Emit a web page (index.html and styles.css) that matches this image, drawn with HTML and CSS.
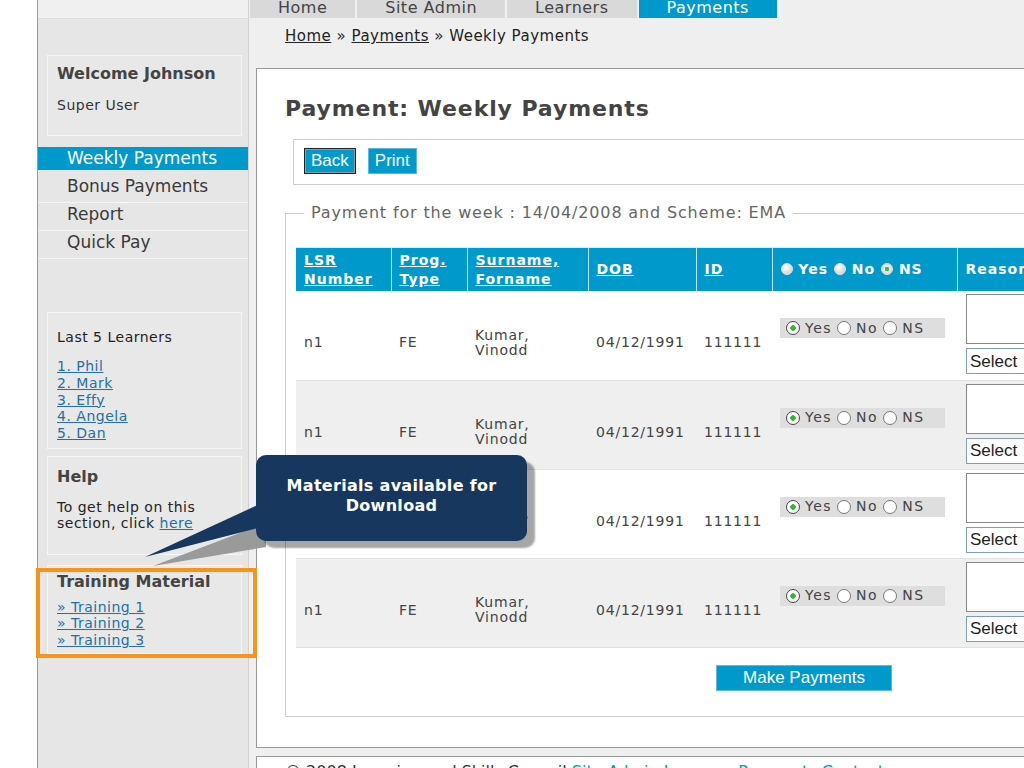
FILE: index.html
```html
<!DOCTYPE html>
<html lang="en">
<head>
    <meta charset="UTF-8">
    <meta name="viewport" content="width=device-width, initial-scale=1.0">
    <link rel="stylesheet" href="styles.css">
    <title>Payment: Weekly Payments</title>
</head>
<body>
    <div class="page">
        <aside class="sidebar">
            <div class="side-top"></div>
            <div class="box welcome">
                <h2>Welcome Johnson</h2>
                <p>Super User</p>
            </div>
            <ul class="side-menu">
                <li class="active"><a href="#">Weekly Payments</a></li>
                <li><a href="#">Bonus Payments</a></li>
                <li><a href="#">Report</a></li>
                <li><a href="#">Quick Pay</a></li>
            </ul>
            <div class="box learners">
                <p>Last 5 Learners</p>
                <ul class="links">
                    <li><a href="#">1. Phil</a></li>
                    <li><a href="#">2. Mark</a></li>
                    <li><a href="#">3. Effy</a></li>
                    <li><a href="#">4. Angela</a></li>
                    <li><a href="#">5. Dan</a></li>
                </ul>
            </div>
            <div class="box help">
                <h2>Help</h2>
                <p>To get help on this section, click <a href="#">here</a></p>
            </div>
            <div class="box training">
                <h2>Training Material</h2>
                <ul class="links">
                    <li><a href="#">&raquo; Training 1</a></li>
                    <li><a href="#">&raquo; Training 2</a></li>
                    <li><a href="#">&raquo; Training 3</a></li>
                </ul>
            </div>
        </aside>

        <div class="main">
            <ul class="tabs">
                <li><a href="#">Home</a></li>
                <li><a href="#">Site Admin</a></li>
                <li><a href="#">Learners</a></li>
                <li class="active"><a href="#">Payments</a></li>
            </ul>
            <div class="crumbs"><a href="#">Home</a> &raquo; <a href="#">Payments</a> &raquo; Weekly Payments</div>

            <div class="panel">
                <h1>Payment: Weekly Payments</h1>
                <div class="toolbar">
                    <button class="btn btn-focus">Back</button>
                    <button class="btn">Print</button>
                </div>

                <fieldset class="week">
                    <legend>Payment for the week : 14/04/2008 and Scheme: EMA</legend>
                    <table class="grid">
                        <colgroup>
                            <col style="width:95px">
                            <col style="width:76px">
                            <col style="width:121px">
                            <col style="width:108px">
                            <col style="width:76px">
                            <col style="width:185px">
                            <col>
                        </colgroup>
                        <thead>
                            <tr>
                                <th><a href="#">LSR<br>Number</a></th>
                                <th><a href="#">Prog.<br>Type</a></th>
                                <th><a href="#">Surname,<br>Forname</a></th>
                                <th><a href="#">DOB</a></th>
                                <th><a href="#">ID</a></th>
                                <th class="head-choice">
                                    <input type="radio" name="all"> Yes
                                    <input type="radio" name="all"> No
                                    <input type="radio" name="all" checked> NS
                                </th>
                                <th>Reason</th>
                            </tr>
                        </thead>
                        <tbody id="rows"></tbody>
                    </table>
                    <div class="actions">
                        <button class="btn btn-wide">Make Payments</button>
                    </div>
                </fieldset>
            </div>

            <div class="footer">
                &copy; 2008 Learning and Skills Council <a href="#">Site Admin</a> <a href="#">Learners</a> <a href="#">Payments</a> <a href="#">Contact</a>
            </div>
        </div>
    </div>

    <svg class="tail" width="130" height="80" viewBox="0 0 130 80">
        <polygon points="126,28 126,52 13,71" fill="#9a9a9a"/>
        <polygon points="122,8 122,32 5,62" fill="#17375e"/>
    </svg>
    <div class="callout">Materials available for<br>Download</div>
    <div class="highlight"></div>

    <script>
        let rows = document.getElementById('rows');
        for (let i = 0; i < 4; i++) {
            let tr = document.createElement('tr');
            tr.innerHTML =
                '<td>n1</td>' +
                '<td>FE</td>' +
                '<td>Kumar,<br>Vinodd</td>' +
                '<td>04/12/1991</td>' +
                '<td>111111</td>' +
                '<td class="pick"><span class="choice">' +
                    '<input type="radio" name="r' + i + '" checked> Yes ' +
                    '<input type="radio" name="r' + i + '"> No ' +
                    '<input type="radio" name="r' + i + '"> NS' +
                '</span></td>' +
                '<td class="reason"><textarea></textarea>' +
                    '<select><option>Select</option></select></td>';
            rows.appendChild(tr);
        }
    </script>
</body>
</html>
```

FILE: styles.css
```css
body {
    margin: 0;
    width: 1024px;
    height: 768px;
    overflow: hidden;
    position: relative;
    background-color: #fff;
    font-family: "DejaVu Sans", Verdana, sans-serif;
    color: #333;
}

ul {
    list-style: none;
    margin: 0;
    padding: 0;
}

a {
    color: #1f6fa8;
}

.page {
    display: flex;
    margin-left: 37px;
    border-left: 1px solid #999;
    height: 768px;
}

/* left column */
.sidebar {
    width: 210px;
    flex: none;
    background-color: #e6e6e6;
    border-right: 1px solid #d2d2d2;
}

.side-top {
    height: 18px;
    background-color: #f0f0f0;
    border-bottom: 1px solid #dcdcdc;
}

.box {
    margin: 0 6px 0 9px;
    background-color: #e8e8e8;
    border: 1px solid #f6f6f6;
    padding: 0 9px;
}

.box h2 {
    margin: 0;
    font-size: 16px;
    line-height: 20px;
    color: #444;
}

.box p {
    margin: 0;
    font-size: 14px;
    letter-spacing: 0.5px;
}

.links {
    font-size: 14px;
    line-height: 16.8px;
    letter-spacing: 0.5px;
}

.welcome {
    margin-top: 36px;
    padding-top: 8px;
    padding-bottom: 21px;
}

.welcome p {
    margin-top: 12px;
    line-height: 18px;
}

.side-menu {
    margin-top: 11px;
    font-size: 17px;
}

.side-menu li {
    padding-bottom: 4px;
    border-bottom: 1px solid #f5f5f5;
}

.side-menu li:first-child {
    border-bottom: 0;
    padding-bottom: 5px;
}

.side-menu a {
    display: block;
    padding-left: 29px;
    line-height: 23px;
    color: #3a3a3a;
    text-decoration: none;
}

.side-menu .active a {
    background-color: #0099cc;
    color: #fff;
}

.learners {
    margin-top: 53px;
    padding-top: 15px;
    padding-bottom: 6px;
}

.learners p {
    line-height: 18px;
    color: #222;
}

.learners .links {
    margin-top: 12px;
}

.help {
    margin-top: 7px;
    padding-top: 10px;
    padding-bottom: 23px;
}

.help p {
    margin-top: 12px;
    line-height: 16px;
    color: #222;
}

.training {
    margin-top: 10px;
    padding-top: 6px;
    padding-bottom: 5px;
}

.training .links {
    margin-top: 7px;
    line-height: 16.5px;
}

/* main column */
.main {
    flex: none;
    width: 1100px;
    background-color: #efefef;
}

.tabs {
    display: flex;
    height: 18px;
    padding-left: 1px;
}

.tabs li {
    margin-right: 2px;
    background-color: #d9d9d9;
}

.tabs a {
    display: block;
    padding: 0 28px;
    line-height: 15px;
    font-size: 16px;
    letter-spacing: 0.5px;
    color: #444;
    text-decoration: none;
}

.tabs .active {
    background-color: #0099cc;
}

.tabs .active a {
    color: #fff;
}

.crumbs {
    padding: 9px 0 23px 36px;
    font-size: 15px;
    line-height: 18px;
    letter-spacing: 0.5px;
    color: #222;
}

.crumbs a {
    color: #222;
}

.panel {
    margin-left: 7px;
    background-color: #fff;
    border: 1px solid #999;
    padding: 24px 0 30px 28px;
}

.panel h1 {
    margin: 0;
    font-size: 22px;
    line-height: 32px;
    letter-spacing: 0.9px;
    color: #444;
}

.toolbar {
    display: flex;
    gap: 12px;
    margin: 14px 0 0 8px;
    padding: 8px 10px 10px;
    border: 1px solid #ccc;
}

.btn {
    height: 26px;
    padding: 0 6px;
    font-family: "Liberation Sans", Arial, sans-serif;
    font-size: 17px;
    color: #fff;
    background-color: #0099cc;
    border: 1px solid #5cb8dc;
    cursor: pointer;
}

.btn-focus {
    border-color: #222;
    box-shadow: inset 0 0 0 1px #9a9a9a;
}

.btn-wide {
    width: 176px;
}

.week {
    width: 1016px;
    margin: 18px 0 0;
    padding: 0 10px 25px;
    border: 1px solid #ccc;
}

.week legend {
    margin-left: 8px;
    padding: 0 7px;
    font-size: 16px;
    line-height: 20px;
    letter-spacing: 0.85px;
    color: #666;
}

.grid {
    width: 1016px;
    margin-top: 24px;
    border-collapse: collapse;
    table-layout: fixed;
}

.grid th {
    height: 43px;
    padding: 0 8px;
    background-color: #0099cc;
    border-left: 1px solid #bfe3f0;
    border-top: 1px solid #d5ecf5;
    color: #fff;
    font-size: 14px;
    line-height: 19px;
    letter-spacing: 1px;
    text-align: left;
    white-space: nowrap;
}

.grid th:first-child {
    border-left: 0;
}

.grid th a {
    color: #fff;
}

.head-choice input {
    appearance: none;
    width: 12px;
    height: 12px;
    margin: 0 0 -1px;
    border: 1px solid #e0e0e0;
    border-radius: 50%;
    background: radial-gradient(circle at 40% 35%, #fff, #c8c8c8);
}

.head-choice input:checked {
    background: radial-gradient(circle, #3bbf3b 0 2px, #eee 2.5px, #c8c8c8);
}

.grid tbody tr {
    height: 89px;
}

.grid td {
    padding: 15px 8px 0;
    font-size: 14px;
    line-height: 15px;
    letter-spacing: 0.8px;
    color: #444;
    vertical-align: middle;
    border-bottom: 1px solid #e2e2e2;
}

.grid tbody tr:nth-child(even) td {
    background-color: #efefef;
}

.grid td.pick {
    vertical-align: top;
    padding-top: 27px;
}

.choice {
    display: inline-flex;
    align-items: center;
    gap: 5px;
    height: 20px;
    padding: 0 20px 0 6px;
    background-color: #dedede;
    letter-spacing: 1.5px;
}

.choice input {
    appearance: none;
    width: 14px;
    height: 14px;
    margin: 0;
    border: 1px solid #777;
    border-radius: 50%;
    background-color: #fff;
}

.choice input:checked {
    background: radial-gradient(circle, #35b535 0 2.5px, #fff 3px);
    border-color: #444;
}

.grid td.reason {
    vertical-align: top;
    padding: 3px 8px 0 9px;
}

.reason textarea {
    display: block;
    width: 200px;
    height: 50px;
    margin: 0;
    padding: 0;
    border: 1px solid #888;
    resize: none;
    box-sizing: border-box;
}

.reason select {
    display: block;
    width: 200px;
    height: 26px;
    margin-top: 4px;
    padding: 0 3px;
    border: 1px solid #7f9db9;
    background-color: #fff;
    font-family: "Liberation Sans", Arial, sans-serif;
    font-size: 17px;
    color: #222;
    appearance: none;
}

.actions {
    margin-top: 17px;
    text-align: center;
}

.footer {
    margin: 8px 0 0 7px;
    padding: 5px 28px;
    background-color: #fff;
    border: 1px solid #999;
    font-size: 16px;
    color: #333;
}

.footer a {
    color: #0099cc;
    text-decoration: none;
}

/* overlays */
.tail {
    position: absolute;
    left: 140px;
    top: 495px;
}

.callout {
    position: absolute;
    left: 256px;
    top: 455px;
    width: 271px;
    height: 86px;
    padding-bottom: 4px;
    box-sizing: border-box;
    display: flex;
    align-items: center;
    justify-content: center;
    border-radius: 10px;
    background-color: #17375e;
    box-shadow: 8px 7px 2px rgba(0, 0, 0, 0.35);
    color: #fff;
    font-weight: bold;
    font-size: 16px;
    line-height: 20px;
    letter-spacing: 0.3px;
    text-align: center;
}

.highlight {
    position: absolute;
    left: 36px;
    top: 568px;
    width: 213px;
    height: 82px;
    border: 4px solid #f7941d;
}
```
